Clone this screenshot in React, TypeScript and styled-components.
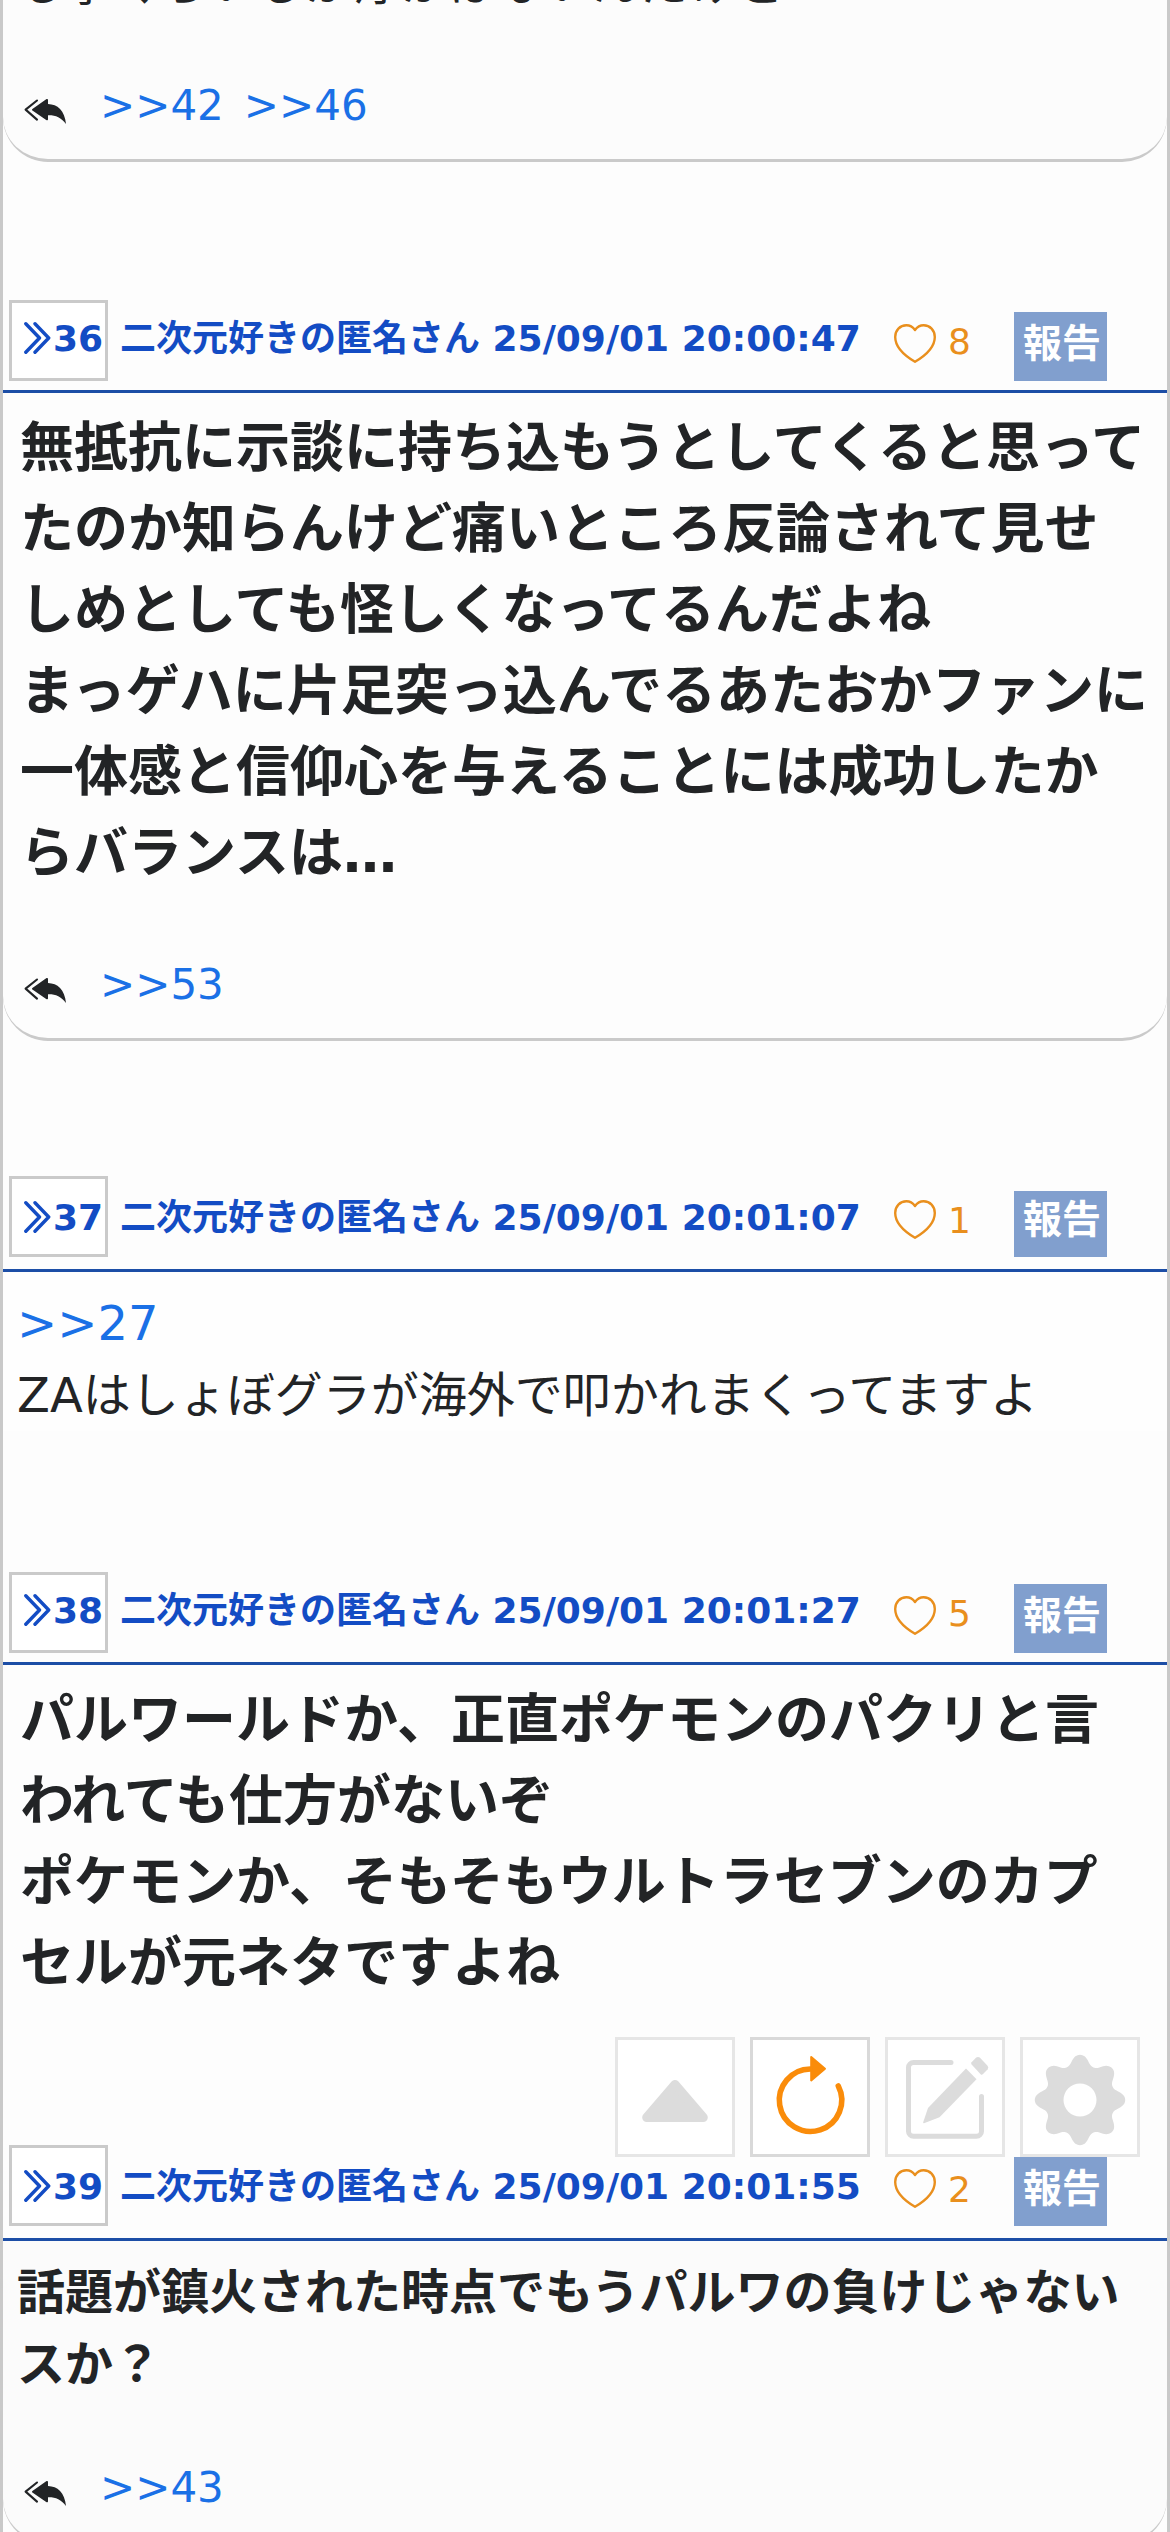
import React from "react";
import styled, { createGlobalStyle } from "styled-components";

const GlobalStyle = createGlobalStyle`
  *, *::before, *::after { box-sizing: border-box; }
  html, body { margin: 0; padding: 0; }
  body {
    background: #fdfdfd;
    color: #222426;
    font-family: "DejaVu Sans", "Noto Sans CJK JP", sans-serif;
    overflow: hidden;
  }
`;

const Thread = styled.main`
  width: 1170px;
  height: 2532px;
  overflow: hidden;
  border-left: 3px solid #c9c9c9;
  border-right: 3px solid #c9c9c9;
  background: #fdfdfd;
`;

const Post = styled.article<{ $gap: number }>`
  margin-bottom: ${(p) => p.$gap}px;
`;

const Card = styled.div<{ $outlined: boolean; $tone: string }>`
  background: ${(p) => p.$tone};
  border-bottom: ${(p) => (p.$outlined ? "3px solid #cacaca" : "none")};
  border-radius: ${(p) => (p.$outlined ? "0 0 45px 45px" : "0")};
`;

const Header = styled.header`
  display: flex;
  align-items: flex-start;
  height: 96px;
  padding-left: 6px;
  border-bottom: 3px solid #1c4ea6;
  white-space: nowrap;
`;

const NumberBox = styled.a<{ $lift: number }>`
  display: flex;
  align-items: flex-start;
  flex: none;
  width: 99px;
  height: 81px;
  margin-top: ${(p) => 3 - p.$lift}px;
  padding: ${(p) => 15 + p.$lift}px 0 0 12px;
  border: 3px solid #cacaca;
  background: #fff;
  color: #134cc4;
  font-size: 36px;
  font-weight: 700;
  line-height: 42px;

  svg {
    flex: none;
    margin: 4px 2px 0 0;
  }
`;

const Title = styled.div`
  flex: none;
  width: 774px;
  margin: 21px 0 0 12px;
  color: #134cc4;
  font-size: 36px;
  font-weight: 700;
  line-height: 42px;
`;

const Like = styled.button<{ $lift: number }>`
  display: flex;
  align-items: flex-start;
  flex: none;
  width: 120px;
  padding: 0;
  border: 0;
  background: none;
  color: #e98f1d;
  font: inherit;
  font-size: 36px;
  line-height: 42px;

  svg {
    flex: none;
    margin: ${(p) => 27 - p.$lift}px 12px 0 0;
  }

  span {
    margin-top: 24px;
  }
`;

const Report = styled.button<{ $top: number; $height: number; $text: number }>`
  flex: none;
  width: 93px;
  height: ${(p) => p.$height}px;
  margin-top: ${(p) => p.$top}px;
  padding: ${(p) => p.$text}px 0 0 9px;
  border: 0;
  background: #819fce;
  color: #fff;
  display: flex;
  align-items: flex-start;
  font: inherit;
  font-size: 39px;
  font-weight: 700;
  line-height: 42px;
`;

const Body = styled.div<{ $size: number; $bold?: boolean; $cut?: number }>`
  margin-top: ${(p) => -(p.$cut ?? 0)}px;
  padding: ${(p) => (p.$cut ? 0 : 15)}px 0 0 ${(p) => (p.$size > 48 ? 17 : 14)}px;
  font-size: ${(p) => p.$size}px;
  font-weight: ${(p) => (p.$bold ? 700 : 400)};
  line-height: 1.5;
  white-space: nowrap;
`;

const Link = styled.a`
  color: #1a70e6;
`;

const Replies = styled.footer<{ $space: number }>`
  display: flex;
  gap: 20px;
  padding: ${(p) => p.$space}px 0 23px 21px;
  font-size: 42px;
  line-height: 60px;

  svg {
    flex: none;
    margin: 23px 14px 0 0;
  }
`;

const Toolbar = styled.nav`
  position: fixed;
  right: 30px;
  bottom: 375px;
  display: flex;
  gap: 15px;
`;

const Tool = styled.button<{ $active?: boolean }>`
  width: 120px;
  height: 120px;
  padding: 0;
  border: 3px solid ${(p) => (p.$active ? "#d9d9d9" : "#e6e6e6")};
  background: #fff;
  color: ${(p) => (p.$active ? "#fa8c0a" : "#dcdcdc")};

  svg {
    display: block;
    margin: -3px;
  }
`;

const ChevronsIcon = () => (
  <svg width="27" height="32" viewBox="0 0 27 32" fill="none" stroke="currentColor" strokeWidth="3.4" strokeLinecap="round" strokeLinejoin="round">
    <path d="M1.8 1.8 15.5 16 1.8 30.2M11 1.8 24.7 16 11 30.2" />
  </svg>
);

const HeartIcon = () => (
  <svg width="42" height="39" viewBox="0 0 42 39" fill="none" stroke="currentColor" strokeWidth="2.4" strokeLinejoin="round">
    <path d="M21 6C18.8 3 15.8 1.3 12.4 1.3 6 1.3 1.2 6.3 1.2 13 1.2 22 9.5 31 21 37.8 32.5 31 40.8 22 40.8 13 40.8 6.3 36 1.3 29.6 1.3 26.2 1.3 23.2 3 21 6Z" />
  </svg>
);

const ReplyAllIcon = () => (
  <svg width="42" height="26" viewBox="0 0 42 26">
    <path d="M13 1.5 1.6 10.6 13 20.6" fill="none" stroke="currentColor" strokeWidth="2.1" strokeLinecap="round" strokeLinejoin="round" />
    <path d="M22.2.3C23.2-.3 24 .1 24 1.2V5C33.5 5.3 40.7 11.3 42 25 37 18.3 31.5 16 24 16.2V20.2C24 21.3 23.2 21.7 22.2 21L8.4 11.4C7.8 10.9 7.8 10.4 8.4 9.9Z" fill="currentColor" />
  </svg>
);

const UpIcon = () => (
  <svg width="120" height="120" viewBox="0 0 120 120" fill="currentColor" stroke="currentColor" strokeWidth="9" strokeLinejoin="round">
    <path d="M60 47.5 88.3 80.5H31.7Z" />
  </svg>
);

const RefreshIcon = () => (
  <svg width="120" height="120" viewBox="0 0 120 120">
    <path d="M88.3 49A31.2 31.2 0 1 1 60.3 32" fill="none" stroke="currentColor" strokeWidth="5.6" strokeLinecap="round" />
    <path d="M61.2 20 75 31.7 61.2 43.4Z" fill="currentColor" stroke="currentColor" strokeWidth="2" strokeLinejoin="round" />
  </svg>
);

const EditIcon = () => (
  <svg width="120" height="120" viewBox="0 0 120 120" fill="currentColor">
    <path d="M66 25.6H28.5A5 5 0 0 0 23.5 30.6V94.3A5 5 0 0 0 28.5 99.3H91.5A5 5 0 0 0 96.5 94.3V59.5" fill="none" stroke="currentColor" strokeWidth="5" strokeLinecap="round" />
    <path d="M81 31.5 91.5 42.3 54.5 80.2 39 86.2Q38 86.3 38.2 85.2L43 71Z" />
    <path d="M86.6 25.2 91.2 20.6Q93 19.2 94.8 20.6L102.5 28.8Q104 30.6 102.7 32.3L97.8 37.3Q96.7 38.2 95.6 37.2L86.6 27.6Q85.6 26.4 86.6 25.2Z" />
  </svg>
);

const gearOutline = Array.from({ length: 240 }, (_, i) => {
  const angle = (i / 240) * Math.PI * 2;
  const wave = Math.cos(angle * 8);
  const radius = 40.2 + 5 * wave + 0.9 * (wave * (1 - wave * wave));
  return `${(60 + radius * Math.sin(angle)).toFixed(2)} ${(63 - radius * Math.cos(angle)).toFixed(2)}`;
}).join("L");

const GearIcon = () => (
  <svg width="120" height="120" viewBox="0 0 120 120" fill="currentColor">
    <path fillRule="evenodd" d={`M${gearOutline}ZM43.5 63a16.5 16.5 0 1 0 33 0a16.5 16.5 0 1 0-33 0Z`} />
  </svg>
);

interface PostData {
  id: number;
  time?: string;
  likes?: number;
  lift: number;
  report: [number, number, number];
  size: number;
  bold?: boolean;
  cut?: number;
  quote?: string;
  lines: string[];
  replies?: string[];
  replySpace?: number;
  tone: string;
  gap: number;
}

const posts: PostData[] = [
  {
    id: 35, lift: 0, report: [0, 0, 0], size: 48, cut: 53,
    lines: ["る事くらいしか浮かばないんだけど"],
    replies: [">>42", ">>46"], replySpace: 57, tone: "#fcfcfc", gap: 135,
  },
  {
    id: 36, time: "25/09/01 20:00:47", likes: 8, lift: 0, report: [15, 69, 11], size: 54, bold: true,
    lines: [
      "無抵抗に示談に持ち込もうとしてくると思って",
      "たのか知らんけど痛いところ反論されて見せ",
      "しめとしても怪しくなってるんだよね",
      "まっゲハに片足突っ込んでるあたおかファンに",
      "一体感と信仰心を与えることには成功したか",
      "らバランスは…",
    ],
    replies: [">>53"], replySpace: 61, tone: "#fdfdfd", gap: 135,
  },
  {
    id: 37, time: "25/09/01 20:01:07", likes: 1, lift: 3, report: [15, 66, 8], size: 48,
    quote: ">>27", lines: ["ZAはしょぼグラが海外で叩かれまくってますよ"],
    tone: "#fefefe", gap: 138,
  },
  {
    id: 38, time: "25/09/01 20:01:27", likes: 5, lift: 0, report: [15, 69, 11], size: 54, bold: true,
    lines: [
      "パルワールドか、正直ポケモンのパクリと言",
      "われても仕方がないぞ",
      "ポケモンか、そもそもウルトラセブンのカプ",
      "セルが元ネタですよね",
    ],
    tone: "#fdfdfd", gap: 141,
  },
  {
    id: 39, time: "25/09/01 20:01:55", likes: 2, lift: 3, report: [12, 69, 11], size: 48, bold: true,
    lines: ["話題が鎮火された時点でもうパルワの負けじゃない", "スか？"],
    replies: [">>43"], replySpace: 58, tone: "#fbfbfb", gap: 0,
  },
];

const PostView = ({ post }: { post: PostData }) => (
  <Post $gap={post.gap}>
    {post.time && (
      <Header>
        <NumberBox $lift={post.lift}>
          <ChevronsIcon />
          {post.id}
        </NumberBox>
        <Title>二次元好きの匿名さん {post.time}</Title>
        <Like $lift={post.lift}>
          <HeartIcon />
          <span>{post.likes}</span>
        </Like>
        <Report $top={post.report[0]} $height={post.report[1]} $text={post.report[2]}>
          報告
        </Report>
      </Header>
    )}
    <Card $outlined={Boolean(post.replies)} $tone={post.tone}>
      <Body $size={post.size} $bold={post.bold} $cut={post.cut}>
        {post.quote && (
          <div>
            <Link>{post.quote}</Link>
          </div>
        )}
        {post.lines.map((line) => (
          <div key={line}>{line}</div>
        ))}
      </Body>
      {post.replies && (
        <Replies $space={post.replySpace ?? 57}>
          <ReplyAllIcon />
          {post.replies.map((reply) => (
            <Link key={reply}>{reply}</Link>
          ))}
        </Replies>
      )}
    </Card>
  </Post>
);

export default function App() {
  return (
    <>
      <GlobalStyle />
      <Thread lang="ja">
        {posts.map((post) => (
          <PostView key={post.id} post={post} />
        ))}
      </Thread>
      <Toolbar>
        <Tool><UpIcon /></Tool>
        <Tool $active><RefreshIcon /></Tool>
        <Tool><EditIcon /></Tool>
        <Tool><GearIcon /></Tool>
      </Toolbar>
    </>
  );
}
